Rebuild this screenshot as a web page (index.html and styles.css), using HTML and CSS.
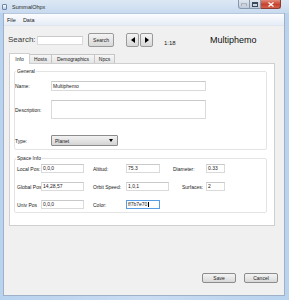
FILE: index.html
```html
<!DOCTYPE html>
<html lang="en">
<head>
    <meta charset="UTF-8">
    <meta name="viewport" content="width=device-width, initial-scale=1.0">
    <title>SummalOhpx</title>
    <link rel="stylesheet" href="styles.css">
</head>
<body>
    <div class="window">
        <div class="titlebar">
            <span class="app-icon"></span>
            <span class="title">SummalOhpx</span>
            <div class="caption-buttons">
                <span class="cap-btn minimize">
                    <svg width="6" height="3" viewBox="0 0 6 3"><rect x="0" y="1" width="6" height="2" fill="#fff" stroke="#3d4a5c" stroke-width="0.5"/></svg>
                </span>
                <span class="cap-btn maximize">
                    <svg width="6" height="5" viewBox="0 0 6 5"><rect x="0.5" y="0.5" width="5" height="4" fill="none" stroke="#3d4a5c" stroke-width="1"/><rect x="1" y="1" width="4" height="1" fill="#3d4a5c"/></svg>
                </span>
                <span class="cap-btn close">
                    <svg width="6" height="5" viewBox="0 0 6 5"><path d="M0.5 0.5 L5.5 4.5 M5.5 0.5 L0.5 4.5" stroke="#fff" stroke-width="1.3"/></svg>
                </span>
            </div>
        </div>

        <div class="client">
            <div class="menubar">
                <span class="menu-item">File</span>
                <span class="menu-item">Data</span>
            </div>

            <div class="toolbar">
                <span class="search-label">Search:</span>
                <div class="field search-input"></div>
                <span class="btn search-btn">Search</span>
                <span class="btn arrow-btn prev">
                    <svg width="4" height="6" viewBox="0 0 4 6"><path d="M4 0 L0 3 L4 6 Z" fill="#000"/></svg>
                </span>
                <span class="btn arrow-btn">
                    <svg width="4" height="6" viewBox="0 0 4 6"><path d="M0 0 L4 3 L0 6 Z" fill="#000"/></svg>
                </span>
                <span class="counter">1:18</span>
                <span class="planet-name">Multiphemo</span>
            </div>

            <div class="tabs">
                <span class="tab active tab-info">Info</span>
                <span class="tab tab-hosts">Hosts</span>
                <span class="tab tab-demo">Demographics</span>
                <span class="tab tab-npcs">Npcs</span>
            </div>

            <div class="pane">
                <fieldset class="group general">
                    <legend>General</legend>
                    <div class="form-row">
                        <span class="label">Name:</span>
                        <div class="field wide">Multiphemo</div>
                    </div>
                    <div class="form-row row-desc">
                        <span class="label">Description:</span>
                        <div class="field wide tall"></div>
                    </div>
                    <div class="form-row row-type">
                        <span class="label">Type:</span>
                        <div class="select">
                            <span>Planet</span>
                            <svg width="4" height="3" viewBox="0 0 4 3"><path d="M0 0 L4 0 L2 3 Z" fill="#000"/></svg>
                        </div>
                    </div>
                </fieldset>

                <fieldset class="group space">
                    <legend>Space Info</legend>
                    <div class="space-grid">
                        <span class="label">Local Pos:</span>
                        <div class="field">0,0,0</div>
                        <span class="label mid">Altitud:</span>
                        <div class="field short">75.3</div>
                        <span class="label right-a">Diameter:</span>
                        <div class="field">0.33</div>

                        <span class="label">Global Pos</span>
                        <div class="field">14,28,57</div>
                        <span class="label mid">Orbit Speed:</span>
                        <div class="field">1,0,1</div>
                        <span class="label right-b">Surfaces:</span>
                        <div class="field">2</div>

                        <span class="label">Univ Pos</span>
                        <div class="field">0,0,0</div>
                        <span class="label mid">Color:</span>
                        <div class="field short focused">ff7b7e70<span class="caret"></span></div>
                    </div>
                </fieldset>
            </div>

            <div class="footer">
                <span class="btn action-btn">Save</span>
                <span class="btn action-btn">Cancel</span>
            </div>
        </div>
    </div>
</body>
</html>
```

FILE: styles.css
```css
body {
    margin: 0;
    background: #fff;
    font-family: 'Liberation Sans', Arial, sans-serif;
    color: #1b1b1b;
    overflow: hidden;
}

.window {
    width: 289px;
    height: 300px;
    box-sizing: border-box;
    padding: 0 4px 4px 3px;
    display: flex;
    flex-direction: column;
    background: linear-gradient(90deg, #b9d2ee, #c9dcf2 50%, #b9d2ee);
}

/* title bar */
.titlebar {
    height: 13px;
    flex: none;
    display: flex;
    align-items: center;
    margin-left: -3px;
    margin-right: -4px;
    padding-left: 2px;
    background: linear-gradient(#dde8f5, #c8daef);
}

.app-icon {
    width: 5px;
    height: 6px;
    border: 1px solid #6b86a8;
    background: linear-gradient(#ffffff, #b8cbe0);
    border-radius: 1px;
    box-sizing: border-box;
    margin-top: 1px;
}

.title {
    margin-left: 5px;
    font-size: 5.5px;
    color: #2b2b2b;
    margin-top: 1px;
}

.caption-buttons {
    margin-left: auto;
    margin-right: 8px;
    align-self: flex-start;
    display: flex;
}

.cap-btn {
    height: 9px;
    display: flex;
    justify-content: center;
    align-items: center;
    box-sizing: border-box;
    border: 1px solid #8797ad;
    border-top: none;
    background: linear-gradient(#dfe6ef, #bfcadb);
}

.cap-btn.minimize { width: 12px; border-radius: 0 0 0 3px; }
.cap-btn.maximize { width: 11px; border-left: none; }
.cap-btn.close {
    width: 20px;
    border-left: none;
    border-color: #8e3a2e;
    border-radius: 0 0 3px 0;
    background: linear-gradient(#e08a79, #c8412d 55%, #d3624c);
}

/* client area */
.client {
    flex: 1;
    display: flex;
    flex-direction: column;
    background: #f0f0f0;
    border: 1px solid #9fb1c8;
    border-top: none;
}

.menubar {
    flex: none;
    display: flex;
    align-items: center;
    gap: 7px;
    padding-left: 3px;
    border-top: 1px solid #b7c8dc;
    border-bottom: 1px solid #dfe6ef;
    box-sizing: border-box;
    height: 13px;
    background: linear-gradient(#fbfcfe, #e6edf6);
    font-size: 5.5px;
}

.toolbar {
    display: flex;
    align-items: center;
    height: 14px;
    margin-top: 7px;
    padding-left: 4px;
}

.search-label {
    width: 29px;
    font-size: 8px;
    color: #3a3a3a;
    margin-top: -1px;
}

.field {
    height: 9px;
    box-sizing: border-box;
    background: #fff;
    border: 1px solid #dadada;
    border-top-color: #c9c9c9;
    font-size: 5px;
    line-height: 7px;
    padding-left: 1px;
    white-space: nowrap;
    overflow: hidden;
}

.search-input {
    width: 46px;
    height: 9px;
    margin-top: 1px;
}

.btn {
    display: flex;
    justify-content: center;
    align-items: center;
    box-sizing: border-box;
    border: 1px solid #9a9a9a;
    border-radius: 2px;
    background: linear-gradient(#f4f4f4, #e6e6e6 50%, #d8d8d8);
    font-size: 5px;
}

.search-btn {
    width: 26px;
    height: 14px;
    margin-left: 5px;
}

.arrow-btn {
    width: 13px;
    height: 14px;
    margin-left: 1px;
}

.arrow-btn.prev { margin-left: 12px; }

.counter {
    width: 46px;
    margin-left: 11px;
    font-size: 6px;
    margin-top: 6px;
}

.planet-name {
    font-size: 9px;
    color: #111;
    margin-top: -1px;
}

/* tabs */
.tabs {
    display: flex;
    height: 10px;
    margin-top: 6px;
    margin-left: 5px;
    align-items: flex-end;
    position: relative;
    z-index: 1;
}

.tab {
    height: 9px;
    box-sizing: border-box;
    border: 1px solid #c6c6c6;
    border-bottom: none;
    margin-left: -1px;
    display: flex;
    justify-content: center;
    align-items: center;
    font-size: 5px;
    background: linear-gradient(#f6f6f6, #e4e4e4);
}

.tab.active {
    height: 11px;
    margin-left: 0;
    margin-bottom: -1px;
    background: #fff;
    border-color: #cfcfcf;
    z-index: 2;
}

.tab-info { width: 21px; }
.tab-hosts { width: 23px; }
.tab-demo { width: 44px; }
.tab-npcs { width: 21px; }

.pane {
    height: 163px;
    flex: none;
    box-sizing: border-box;
    margin: 0 9px 0 5px;
    padding: 4px 7px 0 4px;
    background: #fff;
    border: 1px solid #cfcfcf;
}

.group {
    margin: 0;
    padding: 0 0 3px 0;
    border: 1px solid #e4e4e4;
    border-radius: 2px;
}

.group legend {
    font-size: 5px;
    line-height: 7px;
    padding: 0 1px;
    margin-left: 1px;
}

.general { padding-top: 6px; }

.form-row {
    display: flex;
    align-items: center;
}

.row-desc { margin-top: 9px; }
.row-type { margin-top: 16px; }

.label {
    font-size: 5px;
    line-height: 6px;
    white-space: nowrap;
    color: #222;
}

.form-row .label { width: 36px; }

.field.wide { width: 155px; height: 10px; line-height: 8px; }
.field.tall { height: 19px; }

.select {
    width: 67px;
    height: 11px;
    box-sizing: border-box;
    display: flex;
    align-items: center;
    justify-content: space-between;
    padding: 0 4px 0 3px;
    border: 1px solid #8c8c8c;
    border-radius: 1px;
    background: linear-gradient(#f2f2f2, #e3e3e3 50%, #d4d4d4);
    font-size: 5px;
}

.space {
    margin-top: 5px;
    padding-top: 2px;
    padding-bottom: 3px;
}

.space-grid {
    display: grid;
    grid-template-columns: 24px 43px 42px 43px 37px 19px;
    row-gap: 9px;
    align-items: center;
    padding-left: 2px;
}

.space-grid .field { height: 9px; }
.space-grid .field.short { width: 34px; }
.space-grid .label.mid { padding-left: 9px; }
.space-grid .label.right-a { padding-left: 4px; }
.space-grid .label.right-b { padding-left: 13px; }

.field.focused {
    border-color: #569de5;
}

.caret {
    display: inline-block;
    width: 0.5px;
    height: 5px;
    background: #000;
    vertical-align: top;
    margin-top: 1px;
    margin-left: 0.5px;
}

.footer {
    margin-top: auto;
    display: flex;
    justify-content: flex-end;
    gap: 8px;
    padding: 0 6px 12px 0;
}

.action-btn {
    width: 34px;
    height: 10px;
    border-color: #8c8c8c;
}
```
